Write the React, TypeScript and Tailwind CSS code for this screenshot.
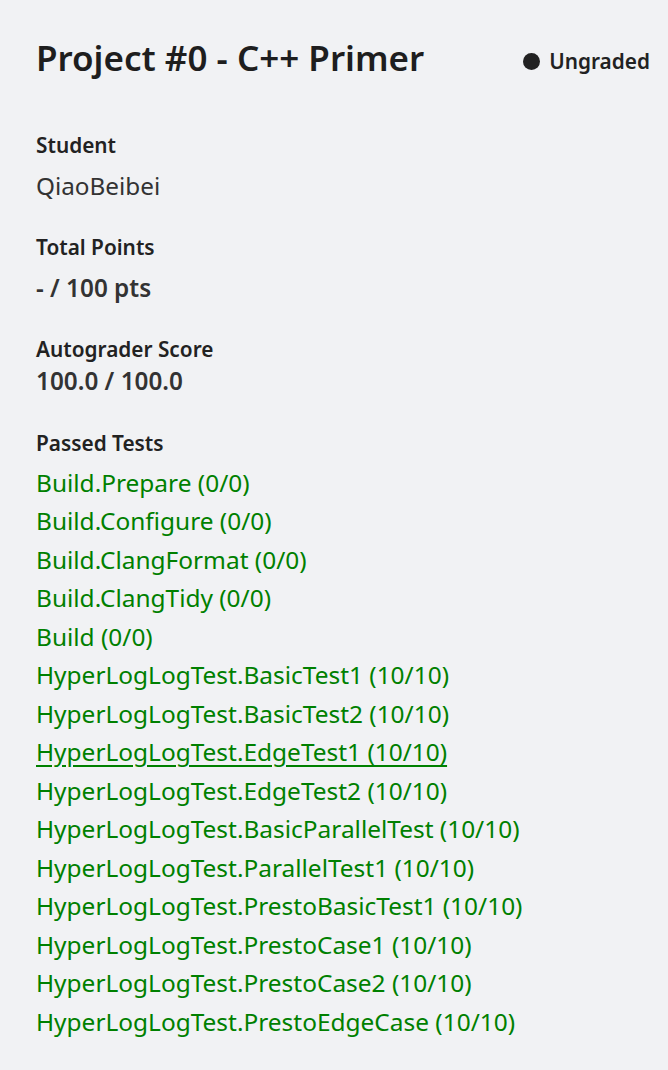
import React from 'react';

const tests = [
  'Build.Prepare (0/0)',
  'Build.Configure (0/0)',
  'Build.ClangFormat (0/0)',
  'Build.ClangTidy (0/0)',
  'Build (0/0)',
  'HyperLogLogTest.BasicTest1 (10/10)',
  'HyperLogLogTest.BasicTest2 (10/10)',
  'HyperLogLogTest.EdgeTest1 (10/10)',
  'HyperLogLogTest.EdgeTest2 (10/10)',
  'HyperLogLogTest.BasicParallelTest (10/10)',
  'HyperLogLogTest.ParallelTest1 (10/10)',
  'HyperLogLogTest.PrestoBasicTest1 (10/10)',
  'HyperLogLogTest.PrestoCase1 (10/10)',
  'HyperLogLogTest.PrestoCase2 (10/10)',
  'HyperLogLogTest.PrestoEdgeCase (10/10)',
];

export default function App() {
  return (
    <div className="min-h-[1070px] w-[668px] bg-[#f1f2f4] pl-[36px] pr-[18px] pt-[34px] text-[#222]" style={{ fontFamily: '"Noto Sans", sans-serif' }}>
      <div className="flex items-center justify-between">
        <h1 className="text-[35px] font-semibold leading-[48px] text-[#1e1e1e]">Project #0 - C++ Primer</h1>
        <div className="mt-[7px] flex items-center gap-[9px] text-[20.8px] font-semibold text-[#222]">
          <span className="inline-block h-[17px] w-[17px] rounded-full bg-[#222]" />
          Ungraded
        </div>
      </div>

      <div className="mt-[49px]">
        <div className="text-[20.8px] font-semibold leading-[28px]">Student</div>
        <div className="mt-[9.5px] text-[24.3px] leading-[33px] text-[#333]">QiaoBeibei</div>
      </div>

      <div className="mt-[31.5px]">
        <div className="text-[20.8px] font-semibold leading-[28px]">Total Points</div>
        <div className="mt-[9.5px] text-[24.3px] font-semibold leading-[33px] text-[#333]">- / 100 pts</div>
      </div>

      <div className="mt-[31.5px]">
        <div className="text-[20.8px] font-semibold leading-[28px]">Autograder Score</div>
        <div className="mt-[0.5px] text-[24.3px] font-semibold leading-[33px] text-[#333]">100.0 / 100.0</div>
      </div>

      <div className="mt-[32.5px]">
        <div className="text-[20.8px] font-semibold leading-[28px]">Passed Tests</div>
        <ul className="mt-[6.75px]">
          {tests.map((t, i) => (
            <li key={t} className="text-[24.45px] leading-[38.5px] text-[#008000]">
              <span className={i === 7 ? 'underline underline-offset-[4px]' : ''}>{t}</span>
            </li>
          ))}
        </ul>
      </div>
    </div>
  );
}
